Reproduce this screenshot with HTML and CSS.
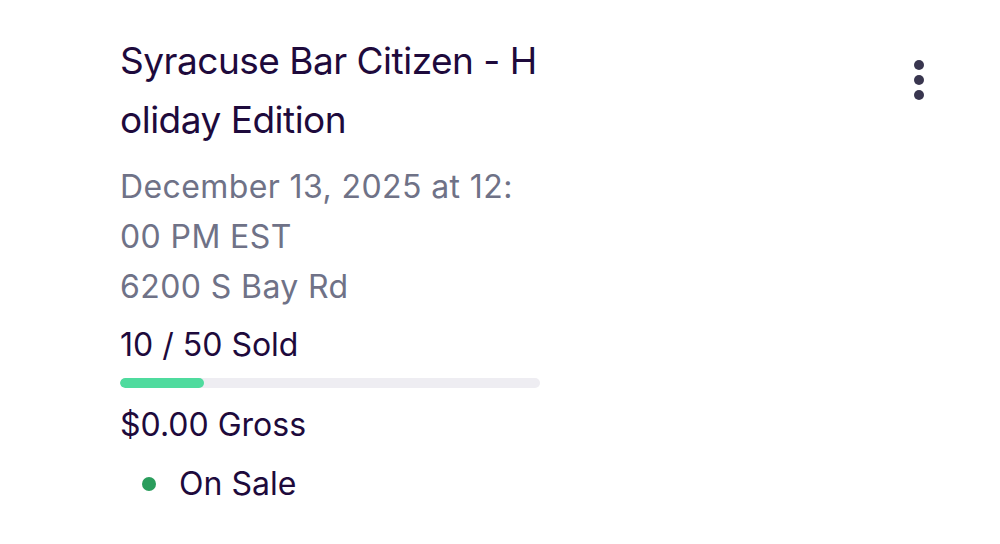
FILE: index.html
```html
<!DOCTYPE html>
<html lang="en">
<head>
<meta charset="utf-8">
<title>Event card</title>
<link rel="stylesheet" href="styles.css">
</head>
<body>
<div class="card">
  <div class="info">
    <h2 class="title">Syracuse Bar Citizen - Holiday Edition</h2>
    <div class="meta">December 13, 2025 at 12:00 PM EST</div>
    <div class="meta">6200 S Bay Rd</div>
    <div class="sold">10 / 50 Sold</div>
    <div class="bar"><div class="fill" style="width:20%"></div></div>
    <div class="gross">$0.00 Gross</div>
    <div class="status"><span class="dot"></span><span>On Sale</span></div>
  </div>
  <button class="kebab" aria-label="More actions">
    <svg width="24" height="40" viewBox="0 0 24 40"><circle cx="12" cy="5" r="5"/><circle cx="12" cy="20" r="5"/><circle cx="12" cy="35" r="5"/></svg>
  </button>
</div>
</body>
</html>
```
FILE: styles.css
```css
html, body {
  margin: 0;
  padding: 0;
  background: #ffffff;
}
body {
  font-family: Inter, "Noto Sans", "Liberation Sans", sans-serif;
  color: #1e0a3c;
}
.card {
  display: flex;
  justify-content: space-between;
  align-items: flex-start;
  padding: 31px 69px 0 120px;
}
.info {
  width: 420px;
  display: flex;
  flex-direction: column;
}
.title {
  margin: 0;
  font-size: 37px;
  font-weight: 400;
  line-height: 59px;
  letter-spacing: -0.5px;
  word-break: break-all;
  color: #1e0a3c;
}
.meta {
  width: 400px;
  font-size: 32px;
  line-height: 50px;
  letter-spacing: 0.4px;
  color: #6f7287;
  word-break: break-all;
}
.title + .meta {
  margin-top: 13px;
}
.sold {
  margin-top: 10px;
  font-size: 32px;
  line-height: 46px;
}
.bar {
  margin-top: 10px;
  height: 10px;
  border-radius: 5px;
  background: #eeedf2;
  overflow: hidden;
}
.fill {
  height: 100%;
  border-radius: 5px;
  background: #4fdb9e;
}
.gross {
  margin-top: 14px;
  font-size: 32px;
  line-height: 46px;
}
.status {
  margin-top: 13px;
  display: flex;
  align-items: center;
  font-size: 32px;
  line-height: 46px;
}
.dot {
  width: 14px;
  height: 14px;
  border-radius: 50%;
  background: #2a9d5c;
  margin: 0 23px 0 22px;
}
.kebab {
  margin-top: 29px;
  padding: 0;
  border: 0;
  background: none;
  display: flex;
}
.kebab svg {
  fill: #39364f;
}
```
